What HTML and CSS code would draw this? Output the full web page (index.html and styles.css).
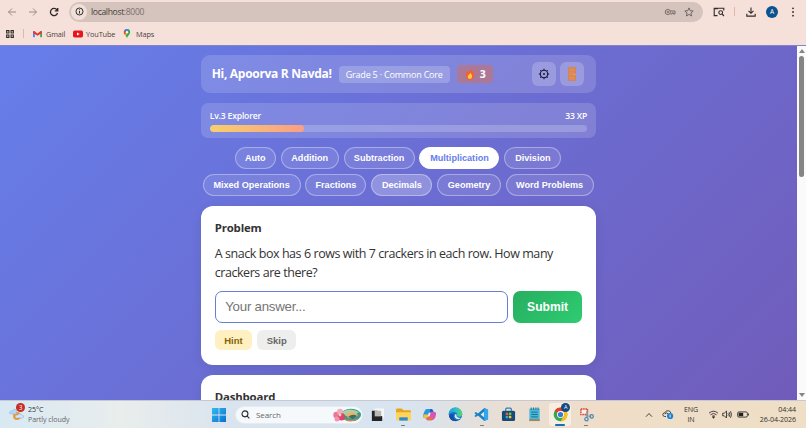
FILE: index.html
```
<!DOCTYPE html>
<html lang="en">
<head>
<meta charset="utf-8">
<title>localhost:8000</title>
<link rel="stylesheet" href="styles.css">
</head>
<body>
<header class="browser">
  <div class="toolbar">
    <svg class="nav back" viewBox="0 0 10 10"><path d="M9 5H1.5M5 1.5L1.5 5L5 8.5"/></svg>
    <svg class="nav forward" viewBox="0 0 10 10"><path d="M1 5H8.5M5 1.5L8.5 5L5 8.5"/></svg>
    <svg class="nav reload" viewBox="0 0 10 10"><path d="M8 3A3.6 3.6 0 1 0 8.5 6M8.7 1V3.8H5.8"/></svg>
    <div class="address">
      <span class="site"><svg viewBox="0 0 10 10"><circle cx="5" cy="5" r="3.9"/><path d="M5 4.4V7.3M5 2.6V3.5"/></svg></span>
      <span class="url">localhost<span class="port">:8000</span></span>
      <svg class="key" viewBox="0 0 11 8"><circle cx="3.3" cy="4" r="2.6"/><circle cx="3.3" cy="4" r=".8"/><path d="M5.7 3H10.5V6H8.8V4.8H7.6V6H6"/></svg>
      <svg class="star" viewBox="0 0 10 10"><path d="M5 .9L6.2 3.7L9.2 4L6.9 6L7.6 9L5 7.4L2.4 9L3.1 6L.8 4L3.8 3.7Z"/></svg>
    </div>
    <svg class="lens" viewBox="0 0 12 10"><path d="M4.5 8.6H1.2V1.2H10.8V3.5M1.2 1.8H5"/><circle cx="7.7" cy="5.6" r="1.9"/><path d="M9.1 7L11 9"/></svg>
    <i class="divider"></i>
    <svg class="download" viewBox="0 0 10 10"><path d="M5 .5V6M2.5 3.8L5 6.3L7.5 3.8M.8 6.8V9.1H9.2V6.8"/></svg>
    <span class="avatar">A</span>
    <svg class="dots" viewBox="0 0 4 10"><circle cx="2" cy="1.3" r=".9"/><circle cx="2" cy="5" r=".9"/><circle cx="2" cy="8.7" r=".9"/></svg>
  </div>
  <div class="bookmarks">
    <svg class="apps" viewBox="0 0 9 9"><path d="M.7 .7H3.3V3.3H.7ZM5.7 .7H8.3V3.3H5.7ZM.7 5.7H3.3V8.3H.7ZM5.7 5.7H8.3V8.3H5.7Z"/></svg>
    <i class="divider"></i>
    <svg class="gmail" viewBox="0 0 10 8"><path d="M0 1H2V7.5H.5L0 7Z" fill="#4285f4"/><path d="M8 1H10V7L9.5 7.5H8Z" fill="#34a853"/><path d="M0 1.5L1.5 .7L5 3.5L8.5 .7L10 1.5V3L5 6L0 3Z" fill="#e33b2e"/></svg>
    <span class="b-gmail">Gmail</span>
    <svg class="youtube" viewBox="0 0 10 8"><rect y=".6" width="10" height="6.8" rx="1.7" fill="#e8151c"/><path d="M4 2.4V5.6L6.7 4Z" fill="#fff"/></svg>
    <span class="b-youtube">YouTube</span>
    <svg class="maps" viewBox="0 0 8 10"><path d="M4 0A3.5 3.5 0 0 0 .5 3.5C.5 6 3 6.8 4 10C5 6.8 7.5 6 7.5 3.5A3.5 3.5 0 0 0 4 0Z" fill="#34a853"/><path d="M4 0A3.5 3.5 0 0 0 1 1.8L4 3.5L6.4 1A3.5 3.5 0 0 0 4 0Z" fill="#4285f4"/><path d="M1 1.8L4 3.5L1.5 6Q.5 5 .5 3.5Q.5 2.5 1 1.8Z" fill="#ea4335"/><path d="M1.5 6L4 3.5L4.8 4.5L2.6 7.3Z" fill="#fbbc04"/><circle cx="4" cy="3.5" r="1.3" fill="#fff"/></svg>
    <span>Maps</span>
  </div>
</header>

<div class="viewport">
  <main class="app">
    <section class="hero">
      <h1>Hi, Apoorva R Navda!</h1>
      <span class="grade"><span>Grade 5 · Common Core</span></span>
      <span class="streak"><svg viewBox="0 0 10 12"><path d="M5.6 0C6 2.2 8.8 3.5 9 7A4 4.5 0 0 1 1 7.5C.8 5.5 2 4.5 2.4 3.1C3 3.5 3.3 4.2 3.4 5C4.8 3.8 5.5 2 5.6 0Z" fill="#f4602b"/><path d="M5.4 4.5C5.8 6 7.4 6.8 7.2 8.8A2.3 2.6 0 0 1 2.7 9C2.6 7.5 3.6 7.2 3.9 6.4C4.7 6.1 5.3 5.3 5.4 4.5Z" fill="#ffc83d"/></svg><b>3</b></span>
      <button class="icon-btn settings"><svg viewBox="0 0 12 12"><circle cx="6" cy="6" r="3.7"/><circle cx="6" cy="6" r=".4"/><path d="M6 .8V2M6 10V11.2M.8 6H2M10 6H11.2M2.3 2.3L3.2 3.2M8.8 8.8L9.7 9.7M9.7 2.3L8.8 3.2M2.3 9.7L3.2 8.8"/></svg></button>
      <button class="icon-btn"><svg class="door" viewBox="0 0 8 14"><rect width="8" height="14" fill="#d48458"/><path d="M1.2 1.2H6.8V4.2H1.2ZM1.2 5.3H6.8V8.5H1.2ZM1.2 9.6H6.8V12.8H1.2Z" fill="#dc8d58"/><circle cx="6.7" cy="7.5" r=".6" fill="#f5c15a"/></svg></button>
    </section>
    <section class="level">
      <div class="level-row"><span class="rank">Lv.3 Explorer</span><span class="xp">33 XP</span></div>
      <div class="track"><div class="fill"></div></div>
    </section>
    <nav class="topics">
      <button class="w-auto">Auto</button><button class="w-addition">Addition</button><button class="w-subtraction">Subtraction</button><button class="w-multiplication active">Multiplication</button><button class="w-division">Division</button>
      <button class="w-mixed">Mixed Operations</button><button class="w-fractions">Fractions</button><button class="w-decimals hover">Decimals</button><button class="w-geometry">Geometry</button><button class="w-word">Word Problems</button>
    </nav>
    <section class="card problem">
      <h2>Problem</h2>
      <p>A snack box has 6 rows with 7 crackers in each row. How many<br>crackers are there?</p>
      <div class="answer"><input type="text" placeholder="Your answer..."><button class="submit">Submit</button></div>
      <div class="actions"><button class="hint">Hint</button><button class="skip">Skip</button></div>
    </section>
    <section class="card dashboard"><h2>Dashboard</h2></section>
  </main>
  <div class="scrollbar"><i class="up"></i><i class="thumb"></i><i class="down"></i></div>
</div>

<footer class="taskbar">
  <div class="weather">
    <svg viewBox="0 0 17 17"><circle cx="8" cy="11" r="4" fill="#f39a24"/><path d="M2 9Q0 9 .7 6.8Q2 5.5 3.3 5.8Q5 3 7.5 5V9Z" fill="#b9d6f2" stroke="#8cb0de" stroke-width=".5"/><path d="M7 13Q5.6 12.5 6.3 11Q7.3 9.5 8.6 10.2Q10.5 7.5 12.6 10Q15 10.3 14.6 12.2Q14 13 13 13Z" fill="#d3e5f8" stroke="#8cb0de" stroke-width=".6"/></svg>
    <span class="count">3</span>
    <div class="weather-text"><span class="temp">25°C</span><span class="sky">Partly cloudy</span></div>
  </div>
  <svg class="start" viewBox="0 0 14 14"><defs><linearGradient id="win" x2="1" y2="1"><stop stop-color="#32b9f0"/><stop offset="1" stop-color="#0872ce"/></linearGradient></defs><path d="M0 0H6.6V6.6H0ZM7.4 0H14V6.6H7.4ZM0 7.4H6.6V14H0ZM7.4 7.4H14V14H7.4Z" fill="url(#win)"/></svg>
  <div class="search">
    <svg class="glass" viewBox="0 0 10 10"><circle cx="4.4" cy="4.3" r="3.3"/><path d="M6.8 6.8L9.3 9.4"/></svg>
    <span>Search</span>
    <svg class="bloom" viewBox="0 0 28 14"><ellipse cx="18" cy="7" rx="10" ry="6.3" fill="#3c9c83"/><path d="M9 4Q17-1 26 4Q22 8 13 8Z" fill="#a9d0a8"/><path d="M13 6Q20 2 25 7Q22 11 15 10Z" fill="#efb05f"/><path d="M15 9Q20 5 24 8L20 11Z" fill="#376d77"/><path d="M10 10Q18 14 26 10Q22 14 14 13Z" fill="#d8814d"/><circle cx="3.5" cy="7" r="3.2" fill="#e87797"/><circle cx="7" cy="3.8" r="3" fill="#f5a8b6"/><circle cx="8.5" cy="9" r="3.5" fill="#db456f"/><circle cx="4" cy="11" r="2.5" fill="#f293a7"/><circle cx="7" cy="7" r="1.4" fill="#fbd1cd"/></svg>
  </div>
  <div class="dock">
    <span><svg viewBox="0 0 16 16"><path d="M5 1.5H15V11.5H5Z" fill="#f7f7f5"/><path d="M2 4H8V9.5H13V15H2Z" fill="#252525"/><path d="M5 4H12V10H5Z" fill="#b9b9b9"/></svg></span>
    <span class="running"><svg viewBox="0 0 16 16"><path d="M0 3Q0 1.5 1.5 1.5H6L8 3.5H14.5Q16 3.5 16 5V13H0Z" fill="#e6a51e"/><path d="M0 5.5H16V13Q16 14.5 14.5 14.5H1.5Q0 14.5 0 13Z" fill="#ffd45a"/><path d="M3.5 11H12.5V14.5H3.5Z" fill="#2d8bd2"/></svg></span>
    <span><svg viewBox="0 0 16 16"><path d="M5 2H10Q11.5 2 12 4L12.3 5H9.5L7 12Q6.5 13 4.5 12Q1 12 1 9.5Q1.3 7 3 4Q3.6 2 5 2Z" fill="#2997e5"/><path d="M2 8L7 8L6 12Q5 13 3 11.8Q0 11 2 8Z" fill="#f1c533"/><path d="M9 5H12.5Q15.5 5 15 8Q14 13.8 10.5 14H6Q4.5 14 4 12Q6.6 13 7.3 10Z" fill="#d457b5"/><path d="M5 11H12L10.5 14H6Q5 14 5 11Z" fill="#f06a45"/><path d="M9 2Q11.5 2 12 5H9.5L8.5 7Z" fill="#2452bb"/><path d="M7.2 6H9.2L8 10H6Z" fill="#f3eef5"/></svg></span>
    <span><svg viewBox="0 0 16 16"><defs><linearGradient id="edge" x2="1"><stop stop-color="#1b9de2"/><stop offset=".55" stop-color="#2dbec9"/><stop offset="1" stop-color="#5bd75f"/></linearGradient></defs><circle cx="8" cy="8" r="7.2" fill="#1670c4"/><path d="M.8 8A7.2 7.2 0 0 1 15.2 7Q15.3 10.5 11.8 10.5Q9 10.5 9.4 9Q10.5 7.5 8.8 6.2Q4.5 3.8 .8 8Z" fill="url(#edge)"/><path d="M9 9Q9 11.4 13.8 11.8Q11 14 8.2 12Q6 10 8 7.5Q10 8 9 9Z" fill="#dcecf3"/><path d="M6 8Q4.5 13.5 10.5 14.8Q3 16 1.2 10Q2 6.5 6 8Z" fill="#1651a1"/></svg></span>
    <span class="running"><svg viewBox="0 0 16 16"><path d="M11 1L15 3V13L11 15L4.2 9L2 10.7L.8 10V9L2.2 8L.8 7V6L2 5.3L4.2 7Z" fill="#1681c7"/><path d="M11 4.8L7 8L11 11.2Z" fill="#dfe8ec"/><path d="M11 1L15 3V13L11 15Z" fill="#35a6ed"/></svg></span>
    <span><svg viewBox="0 0 16 16"><path d="M5 4V2.3Q5 1.3 6 1.3H10Q11 1.3 11 2.3V4" fill="none" stroke="#2482bc" stroke-width="1.3"/><rect x="1" y="4" width="14" height="11" rx="1.6" fill="#174a75"/><path d="M5 6H7.6V8.6H5Z" fill="#ee5b32"/><path d="M8.4 6H11V8.6H8.4Z" fill="#83bf34"/><path d="M5 9.4H7.6V12H5Z" fill="#32a9e6"/><path d="M8.4 9.4H11V12H8.4Z" fill="#fac42b"/></svg></span>
    <span><svg viewBox="0 0 16 16"><rect x="2.5" y="1.5" width="11" height="13.5" rx="1" fill="#49b7d8"/><path d="M4.5 5.5H11.5M4.5 8H11.5M4.5 10.5H11.5" stroke="#17718f"/><path d="M4.5 .5V3M7 .5V3M9.5 .5V3M11.8 .5V3" stroke="#246986"/><path d="M2.5 13H13.5V15H2.5Z" fill="#9c8561"/></svg></span>
    <span class="current"><svg viewBox="0 0 16 16"><circle cx="8" cy="8" r="7.3" fill="#34a853"/><path d="M8 8L1.7 4.2A7.3 7.3 0 0 1 14.5 4.5H8Z" fill="#e63c30"/><path d="M8 4.5H14.4A7.3 7.3 0 0 1 8.2 15.3L11.3 9.8Z" fill="#fbc116"/><circle cx="8" cy="8" r="3.7" fill="#fff"/><circle cx="8" cy="8" r="2.8" fill="#3978d8"/></svg><b>A</b></span>
    <span class="running"><svg viewBox="0 0 16 16"><path d="M2 2H9V8H2Z" fill="#f7f2ec" stroke="#d64635" stroke-width="1.6" stroke-dasharray="1.7 .7"/><path d="M8.5 4L8.5 12M7 9.5L13 10" stroke="#8d99a5" stroke-width="1.5"/><circle cx="8" cy="13" r="1.8" fill="none" stroke="#4388bb" stroke-width="1.3"/><circle cx="13.5" cy="10" r="1.8" fill="none" stroke="#4388bb" stroke-width="1.3"/></svg></span>
  </div>
  <div class="tray">
    <svg class="chevron" viewBox="0 0 8 6"><path d="M1 4.7L4 1.5L7 4.7"/></svg>
    <svg class="cloud" viewBox="0 0 12 11"><path d="M4 7.5H2.5Q.7 7.2.8 5.4Q1.2 3.7 2.8 3.8Q4 1 6.8 1.8Q8.5 2.3 8.8 4M2.8 5Q4.2 3 6 4.6"/><circle cx="8.1" cy="7" r="3.1" fill="#1583d4" stroke="none"/><path d="M8.1 5.5V8.5" stroke="#fff"/></svg>
    <div class="lang"><span>ENG</span><span>IN</span></div>
    <svg class="wifi" viewBox="0 0 11 9"><path d="M1 3.2Q5.5-.8 10 3.2M2.5 4.8Q5.5 2 8.5 4.8M4 6.4Q5.5 5 7 6.4"/><circle cx="5.5" cy="7.4" r=".7" fill="#333"/></svg>
    <svg class="volume" viewBox="0 0 10 9"><path d="M.7 3.2H2.3L4.5 1V8L2.3 5.8H.7ZM6 3.3Q6.8 4.5 6 5.7M7.2 2.2Q8.7 4.5 7.2 6.8M8.5 1.2Q10.6 4.5 8.5 7.8"/></svg>
    <svg class="battery" viewBox="0 0 12 7"><rect x=".6" y=".9" width="9.8" height="5.2" rx="1.4"/><rect x="1.6" y="1.8" width="4.6" height="3.4" fill="#222" stroke="none"/><path d="M11.5 2.5V4.5"/></svg>
    <div class="clock"><span class="time">04:44</span><span class="date">26-04-2026</span></div>
  </div>
</footer>
</body>
</html>
```
FILE: styles.css
```
* { box-sizing: border-box; }
body { margin: 0; width: 806px; height: 428px; overflow: hidden; display: flex; flex-direction: column; font-family: "Open Sans", "Noto Sans", sans-serif; color: #333; }
svg { display: block; flex: none; }
button, input { font-family: "Liberation Sans", Arial, sans-serif; margin: 0; padding: 0; border: 0; }
h1, h2, p { margin: 0; }

/* Browser chrome */
.browser { height: 45px; flex: none; background: #f5e1da; font-size: 7.3px; letter-spacing: -.1px; color: #4a3f3c; }
.toolbar { display: flex; align-items: center; height: 23px; padding-left: 7px; }
.toolbar svg { fill: none; stroke: #302b29; stroke-width: 1.1; }
.nav { width: 10px; height: 10px; margin-right: 11px; }
.toolbar .back, .toolbar .forward { stroke: #94827d; stroke-width: .9; }
.toolbar .reload { stroke-width: 1.35; margin-right: 10px; }
.address { display: flex; align-items: center; width: 634px; height: 20px; border-radius: 10px; background: #d5c4be; padding-left: 2px; font-size: 8.6px; }
.site { display: flex; width: 16px; height: 16px; border-radius: 8px; background: #f1dfd9; align-items: center; justify-content: center; }
.site svg { width: 9px; height: 9px; }
.url { margin-left: 4px; flex: 1; color: #483f3c; letter-spacing: -.35px; }
.port { color: #80706b; }
.toolbar .key { width: 12px; height: 8px; margin-right: 8px; stroke: #70625e; stroke-width: .9; }
.toolbar .star { width: 10px; height: 10px; margin-right: 9px; stroke: #59504d; stroke-width: .8; }
.lens { width: 12px; height: 10px; margin-left: 10px; }
.divider { width: 1px; height: 9px; background: #e5b5a6; }
.toolbar .divider { margin-left: 9px; }
.download { width: 10px; height: 10px; margin-left: 11px; }
.avatar { width: 12px; height: 12px; border-radius: 50%; background: #0b528e; color: #fff; font-size: 6.5px; line-height: 12px; text-align: center; margin-left: 10px; }
.toolbar .dots { width: 4px; height: 10px; margin-left: 13px; fill: #302b29; stroke: none; }
.bookmarks { display: flex; align-items: center; height: 21px; padding-left: 6px; }
.apps { width: 8px; height: 8px; fill: none; stroke: #302b29; stroke-width: 1.2; }
.bookmarks .divider { margin: 0 9px; }
.gmail { width: 9px; height: 8px; margin-right: 4px; }
.b-gmail { width: 27px; }
.youtube { width: 10px; height: 8px; margin-right: 3px; }
.b-youtube { width: 37px; }
.maps { width: 8px; height: 9px; margin-right: 5px; }

/* Page */
.viewport { height: 355px; flex: none; display: flex; overflow: hidden; border-top: 1px solid #8184c8; }
.app { width: 797px; height: 355px; padding: 9px 201px 0 200.7px; background: linear-gradient(135deg, #667eea 0%, #764ba2 150%); }
.hero { display: flex; align-items: center; height: 38px; border-radius: 9px; background: rgba(255,255,255,.15); padding: 0 12px 0 11px; color: #fff; }
.hero h1 { width: 127px; font-size: 12px; line-height: 16px; letter-spacing: -.3px; white-space: nowrap; font-weight: 700; }
.grade { display: flex; align-items: center; justify-content: center; width: 111px; height: 17px; border-radius: 4px; background: rgba(255,255,255,.2); font-size: 9px; letter-spacing: -.2px; white-space: nowrap; }
.streak { display: flex; align-items: center; width: 36px; height: 18px; margin-left: 7px; padding-left: 8px; border-radius: 4px; background: rgba(235,105,50,.4); font-size: 10.5px; }
.streak svg { width: 10px; height: 12px; margin-right: 5px; }
.icon-btn { display: flex; align-items: center; justify-content: center; width: 24px; height: 24px; border-radius: 6px; background: rgba(255,255,255,.2); margin-left: 4px; }
.settings { margin-left: auto; }
.settings svg { width: 12px; height: 12px; fill: none; stroke: #171634; stroke-width: 1.1; }
.door { width: 8px; height: 14px; }
.level { height: 35px; margin-top: 9.5px; border-radius: 7px; background: rgba(255,255,255,.15); padding: 6px 9px 0; color: #fff; }
.level-row { display: flex; justify-content: space-between; height: 16px; font-size: 8.6px; letter-spacing: -.18px; line-height: 14px; font-weight: 600; }
.track { height: 7.5px; border-radius: 4px; background: rgba(255,255,255,.2); overflow: hidden; }
.fill { width: 94px; height: 7.5px; border-radius: 4px; background: linear-gradient(90deg, #f7d06c, #fa9e84); }
.topics { display: flex; flex-wrap: wrap; justify-content: center; align-content: flex-start; gap: 5px 4.9px; margin: 9.5px -1px 0 -1.5px; height: 49px; }
.topics button { height: 22px; border: 1px solid rgba(255,255,255,.35); border-radius: 11px; background: rgba(255,255,255,.1); color: #fff; font-size: 9.1px; font-weight: 700; white-space: nowrap; }
.topics .active { background: #fff; border-color: #fff; color: #667eea; }
.topics .hover { background: rgba(255,255,255,.25); }
.w-auto { width: 41px; }
.w-addition { width: 58px; }
.w-subtraction { width: 71px; }
.w-multiplication { width: 80px; }
.w-division { width: 57px; }
.w-mixed { width: 98px; }
.w-fractions { width: 61px; }
.w-decimals { width: 61px; }
.w-geometry { width: 63.5px; }
.w-word { width: 88px; }
.card { border-radius: 12px; background: #fff; padding: 0 14px; box-shadow: 0 3px 12px rgba(0,0,0,.08); }
.card h2 { font-size: 11.4px; letter-spacing: -.15px; line-height: 16px; font-weight: 700; color: #333; }
.problem { height: 159px; margin-top: 10px; padding-top: 14px; }
.problem p { margin-top: 8px; font-size: 12.5px; letter-spacing: -.44px; line-height: 19.4px; white-space: nowrap; }
.answer { display: flex; gap: 5px; margin-top: 8px; }
.answer input { width: 294px; height: 32px; border: 1.5px solid #667ed4; border-radius: 7px; padding-left: 9.5px; font-size: 13.3px; letter-spacing: -.25px; outline: 0; background: #fff; }
.answer input::placeholder { color: #757575; opacity: 1; }
.submit { width: 69px; height: 32px; border-radius: 7px; background: linear-gradient(135deg, #27ae60, #2ecc71); color: #fff; font-size: 12.1px; font-weight: 700; }
.actions { display: flex; gap: 5px; margin-top: 7px; }
.actions button { height: 20.5px; padding-top: 1px; border-radius: 6px; font-size: 9.5px; font-weight: 700; }
.hint { width: 37.5px; background: #fff0c2; color: #856404; }
.skip { width: 39px; background: #eee; color: #666; }
.dashboard { height: 60px; margin-top: 9.5px; padding-top: 14px; }
.scrollbar { display: flex; flex-direction: column; align-items: center; width: 9px; background: #fafafa; padding: 3px 0; }
.up, .down { border: 3px solid transparent; }
.up { border-bottom: 4px solid #858585; border-top: 0; }
.down { border-top: 4px solid #858585; border-bottom: 0; margin-top: auto; }
.thumb { width: 5px; height: 121px; margin-top: 3px; border-radius: 3px; background: #858585; }

/* Desktop taskbar */
.taskbar { height: 28px; flex: none; display: flex; align-items: center; border-top: 1px solid #c7c8d2; background: linear-gradient(90deg, #d8e9f3 0, #e9edec 120px, #dae4ef 230px, #d8e4ef 410px, #e7dfd7 490px, #efddc8 600px, #eedfc6 100%); font-size: 7.1px; letter-spacing: -.08px; line-height: 9.5px; }
.weather { display: flex; position: relative; width: 212px; padding-left: 9px; }
.weather > svg { width: 17px; height: 17px; margin-right: 2px; }
.count { position: absolute; left: 16px; top: -2px; width: 9px; height: 9px; border-radius: 50%; background: #c52c23; color: #fff; text-align: center; font-size: 6.5px; line-height: 9px; }
.weather-text { display: flex; flex-direction: column; }
.sky { color: #68696b; }
.start { width: 14px; height: 14px; margin-right: 9px; }
.search { display: flex; align-items: center; width: 128px; height: 18px; border-radius: 9px; background: #f5f9fc; border: 1px solid #e4ebf1; padding-left: 5px; color: #666; font-size: 8px; }
.glass { width: 9px; height: 9px; fill: none; stroke: #292929; stroke-width: 1.2; margin-right: 6px; }
.bloom { width: 28px; height: 14px; margin-left: auto; margin-right: 1px; }
.dock { display: flex; width: 236px; margin-left: 1px; }
.dock > span { position: relative; display: flex; align-items: center; justify-content: center; width: 26.2px; height: 25px; flex: none; }
.dock svg { width: 15px; height: 15px; }
.dock .running::after { content: ""; position: absolute; bottom: 1px; width: 4px; height: 1.5px; border-radius: 1px; background: #777; }
.dock .current { width: 22px; height: 23px; margin: 1px 2px; border-radius: 3px; background: #f7eee2; }
.dock .current::after { content: ""; position: absolute; bottom: 0; width: 10px; height: 2px; border-radius: 1px; background: #176eb2; }
.current b { position: absolute; right: 1px; top: 0; width: 9px; height: 9px; border-radius: 50%; background: #124b82; color: #fff; font-size: 5.5px; line-height: 9px; text-align: center; font-weight: 400; }
.tray { flex: 1; display: flex; align-items: center; padding-left: 45px; }
.tray svg { fill: none; stroke: #333; stroke-width: .9; }
.chevron { width: 8px; height: 6px; }
.cloud { width: 12px; height: 11px; margin-left: 9px; }
.lang { display: flex; flex-direction: column; align-items: center; width: 18px; margin-left: 8px; }
.wifi { width: 11px; height: 9px; margin-left: 8px; }
.volume { width: 10px; height: 9px; margin-left: 3px; }
.battery { width: 12px; height: 7px; margin-left: 5px; }
.clock { display: flex; flex-direction: column; align-items: flex-end; margin: 0 10px 0 auto; white-space: nowrap; }
```
